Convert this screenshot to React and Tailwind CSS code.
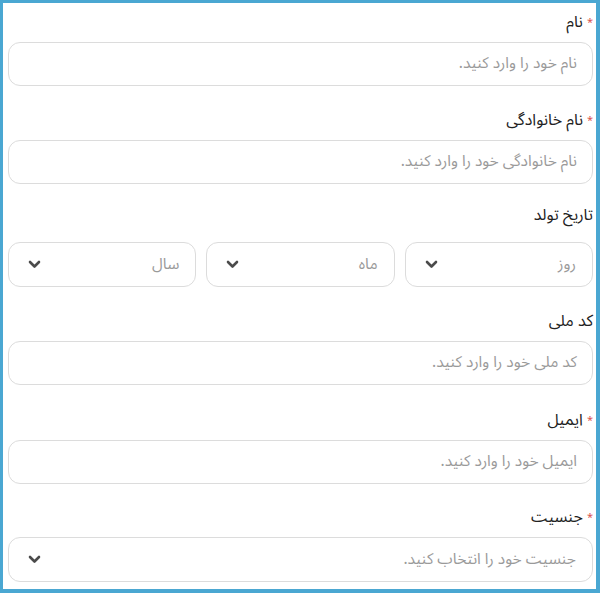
import React from "react";

const font = { fontFamily: '"Noto Sans Arabic", "Vazirmatn", "DejaVu Sans", sans-serif' };

function Chevron() {
  return (
    <svg width="13" height="9" viewBox="0 0 13 9" className="shrink-0">
      <path d="M2 2 L6.5 6.5 L11 2" fill="none" stroke="#4b4b4b" strokeWidth="2.6" strokeLinecap="round" strokeLinejoin="round" />
    </svg>
  );
}

function Label({ text, required, className = "" }) {
  return (
    <div className={`h-6 flex items-center text-[16px] text-[#222] leading-6 ${className}`}>
      {required && <span className="text-[#d9534f] text-[11px] self-start mt-[1px] ml-[4px]">*</span>}
      <span>{text}</span>
    </div>
  );
}

function Input({ placeholder }) {
  return (
    <div className="h-11 w-full rounded-xl border border-[#dcdcdc] bg-white flex items-center pr-[15px] text-[15.5px] text-[#9a9a9a]">
      {placeholder}
    </div>
  );
}

function Select({ placeholder, className = "" }) {
  return (
    <div className={`h-[45px] rounded-xl border border-[#dcdcdc] bg-white flex items-center justify-between pr-[16px] pl-[19px] text-[15.5px] text-[#9a9a9a] ${className}`}>
      <span>{placeholder}</span>
      <Chevron />
    </div>
  );
}

export default function App() {
  return (
    <div dir="rtl" style={font} className="w-[600px] h-[593px] bg-white border-t-[3px] border-l-[3px] border-r-4 border-b-4 border-[#4aa7d2] pl-[5px] pr-[3px] pt-[7px] overflow-hidden">
      <Label text="نام" required />
      <div className="mt-2"><Input placeholder="نام خود را وارد کنید." /></div>

      <Label text="نام خانوادگی" required className="mt-[22px]" />
      <div className="mt-2"><Input placeholder="نام خانوادگی خود را وارد کنید." /></div>

      <Label text="تاریخ تولد" className="mt-[19px]" />
      <div className="mt-[15px] flex gap-[10px]">
        <Select placeholder="روز" className="flex-1" />
        <Select placeholder="ماه" className="flex-1" />
        <Select placeholder="سال" className="flex-1" />
      </div>

      <Label text="کد ملی" className="mt-[22px]" />
      <div className="mt-2"><Input placeholder="کد ملی خود را وارد کنید." /></div>

      <Label text="ایمیل" required className="mt-[23px]" />
      <div className="mt-2"><Input placeholder="ایمیل خود را وارد کنید." /></div>

      <Label text="جنسیت" required className="mt-[21px]" />
      <div className="mt-2"><Select placeholder="جنسیت خود را انتخاب کنید." /></div>
    </div>
  );
}
